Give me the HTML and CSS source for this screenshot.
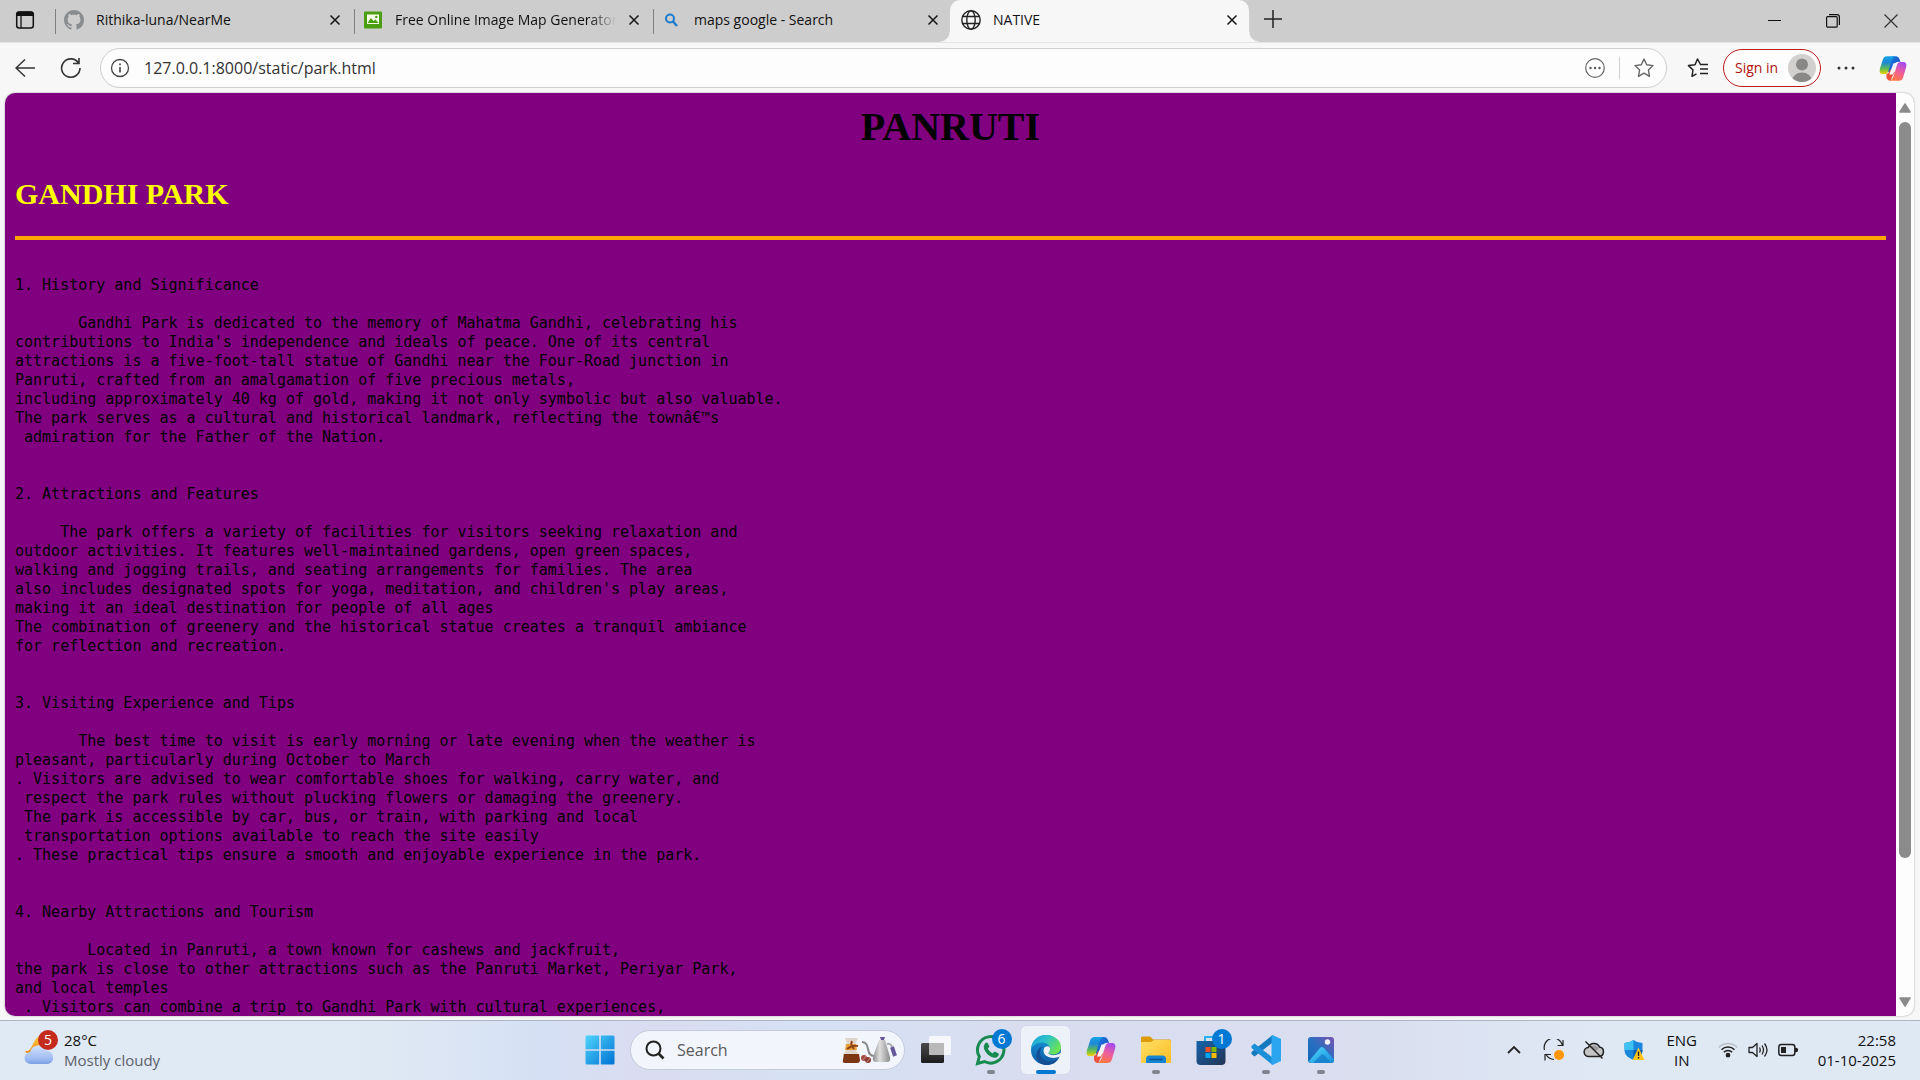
FILE: index.html
```html
<!DOCTYPE html>
<html lang="en">
<head>
<meta charset="utf-8">
<title>NATIVE</title>
<link rel="stylesheet" href="styles.css">
</head>
<body>
<svg width="0" height="0" class="defs" aria-hidden="true">
  <defs>
    <linearGradient id="cpA" x1="0" y1="0" x2="0" y2="1"><stop offset="0" stop-color="#12a5e8"/><stop offset=".35" stop-color="#1f86d8"/><stop offset=".7" stop-color="#5fbf52"/><stop offset="1" stop-color="#f2d000"/></linearGradient>
    <linearGradient id="cpB" x1="0.7" y1="0" x2="0.3" y2="1"><stop offset="0" stop-color="#a54af0"/><stop offset=".5" stop-color="#ee5e9c"/><stop offset="1" stop-color="#ff7a3c"/></linearGradient>
    <linearGradient id="cpC" x1="0" y1="0" x2="1" y2="1"><stop offset="0" stop-color="#1a8fe6"/><stop offset="1" stop-color="#1a34b8"/></linearGradient>
    <linearGradient id="win" x1="0" y1="0" x2="1" y2="1"><stop offset="0" stop-color="#4fd4fb"/><stop offset="1" stop-color="#0072d4"/></linearGradient>
    <linearGradient id="edgeTop" x1="0" y1="0" x2="1" y2=".5"><stop offset="0" stop-color="#1a9fdc"/><stop offset=".5" stop-color="#2cc3c8"/><stop offset="1" stop-color="#6be356"/></linearGradient>
    <linearGradient id="edgeLow" x1="0" y1="0" x2="0" y2="1"><stop offset="0" stop-color="#1a9ade"/><stop offset="1" stop-color="#0c59a4"/></linearGradient>
    <linearGradient id="fold" x1="0" y1="0" x2="1" y2="1"><stop offset="0" stop-color="#ffdf66"/><stop offset="1" stop-color="#fbbd24"/></linearGradient>
    <linearGradient id="store" x1="0" y1="0" x2="1" y2="1"><stop offset="0" stop-color="#1464ac"/><stop offset="1" stop-color="#233453"/></linearGradient>
    <linearGradient id="photo" x1="0" y1="1" x2="1" y2="0"><stop offset="0" stop-color="#1266b8"/><stop offset=".5" stop-color="#2a6fc0"/><stop offset="1" stop-color="#7a52b0"/></linearGradient>
    <linearGradient id="hill" x1="0" y1="0" x2="1" y2="1"><stop offset="0" stop-color="#4fdcff"/><stop offset="1" stop-color="#1688d8"/></linearGradient>
    <linearGradient id="cloud" x1="0" y1="0" x2="0" y2="1"><stop offset="0" stop-color="#d4e2fb"/><stop offset=".7" stop-color="#9fbcf2"/><stop offset="1" stop-color="#7b9fe4"/></linearGradient>
    <linearGradient id="moon" x1="0" y1="0" x2="0" y2="1"><stop offset="0" stop-color="#ffc83c"/><stop offset="1" stop-color="#ee8412"/></linearGradient>
    <linearGradient id="tv" x1="0" y1="0" x2="0" y2="1"><stop offset="0" stop-color="#4a4a4a"/><stop offset="1" stop-color="#1c1c1c"/></linearGradient>
    <linearGradient id="kettle" x1="0" y1="0" x2="1" y2="0"><stop offset="0" stop-color="#8e8e8e"/><stop offset=".4" stop-color="#dedede"/><stop offset="1" stop-color="#8a8a8a"/></linearGradient>
    <symbol id="copilot" viewBox="0 0 30 28">
      <path d="M14 1h4c2 0 3 1 4 3l1 3c-4-1-6 1-7 4l-3 9-6-5z" fill="url(#cpC)"/>
      <path d="M9 1h8c-2 1-3 3-4 6l-3 10c-1 2-2 3-4 3H4c-3 0-4-2-3-6l3-9c1-3 2-4 5-4z" fill="url(#cpA)"/>
      <path d="M8 20c2-1 3-2 4-5l5 3-3 5c-1 3-2 4-1 4h-1c-2 0-3-1-4-3z" fill="#f0503c"/>
      <path d="M21 27h-9c2-1 3-3 4-6l3-10c1-3 2-4 4-4h3c3 0 4 2 3 6l-3 10c-1 3-2 4-5 4z" fill="url(#cpB)"/>
      <path d="M15.500 8.500h4l-4.500 12h-4z" fill="#f4f4fa"/>
    </symbol>
    <symbol id="cross" viewBox="0 0 12 12"><path d="M1.500 1.500l9 9m0-9l-9 9" stroke="#161616" stroke-width="1.500" fill="none"/></symbol>
  </defs>
</svg>

<header class="tabstrip">
  <button class="icon-btn tab-actions" aria-label="Tab actions">
    <svg width="20" height="20" viewBox="0 0 20 20"><rect x="1.700" y="2" width="16.600" height="16" rx="2.500" fill="none" stroke="#111" stroke-width="1.500"/><path d="M1.500 6V4q0-2.500 2.500-2.500h12q2.500 0 2.500 2.500v2z" fill="#111"/><path d="M6 6v12" stroke="#111" stroke-width="1.300"/></svg>
  </button>
  <nav class="tabs">
    <div class="tab">
      <svg width="20" height="20" viewBox="0 0 16 16" fill="#8a8d90"><path d="M8 0C3.580 0 0 3.580 0 8c0 3.540 2.290 6.530 5.470 7.590.4.070.55-.17.55-.38 0-.19-.01-.82-.01-1.490-2.010.37-2.530-.49-2.690-.94-.09-.23-.48-.94-.82-1.130-.28-.15-.68-.52-.01-.53.63-.01 1.080.58 1.230.82.72 1.210 1.870.87 2.330.66.07-.52.28-.87.51-1.070-1.780-.2-3.640-.89-3.640-3.950 0-.87.31-1.590.82-2.150-.08-.2-.36-1.020.08-2.120 0 0 .67-.21 2.200.82.64-.18 1.320-.27 2-.27s1.360.09 2 .27c1.530-1.040 2.200-.82 2.200-.82.44 1.100.16 1.920.08 2.120.51.56.82 1.270.82 2.150 0 3.070-1.870 3.750-3.650 3.950.29.25.54.73.54 1.480 0 1.070-.01 1.930-.01 2.200 0 .21.15.46.55.38A8.010 8.010 0 0 0 16 8c0-4.420-3.580-8-8-8z"/></svg>
      <a href="#github" class="tab-title">Rithika-luna/NearMe</a>
      <button class="icon-btn" aria-label="Close tab"><svg width="12" height="12"><use href="#cross"/></svg></button>
    </div>
    <div class="tab">
      <svg width="20" height="20" viewBox="0 0 20 20"><rect x="1" y="1.500" width="18" height="17" rx="1" fill="#4a9e10"/><rect x="4" y="4.500" width="12" height="9.500" fill="#f4fbe8"/><path d="M4.500 13l3.500-5 2.500 3 2-1.500 3 3.500z" fill="#4a9e10"/><circle cx="13.300" cy="7" r="1.200" fill="#4a9e10"/></svg>
      <a href="#imagemap" class="tab-title fade">Free Online Image Map Generator</a>
      <button class="icon-btn" aria-label="Close tab"><svg width="12" height="12"><use href="#cross"/></svg></button>
    </div>
    <div class="tab">
      <svg width="20" height="20" viewBox="0 0 20 20" fill="none" stroke="#1b7bd0" stroke-width="2"><circle cx="8" cy="8.500" r="4"/><path d="M11 11.500l4 4.500" stroke-width="2.400"/></svg>
      <a href="#maps" class="tab-title">maps google - Search</a>
      <button class="icon-btn" aria-label="Close tab"><svg width="12" height="12"><use href="#cross"/></svg></button>
    </div>
    <div class="tab active">
      <svg width="20" height="20" viewBox="0 0 20 20" fill="none" stroke="#222" stroke-width="1.400"><circle cx="10" cy="10" r="9.200"/><ellipse cx="10" cy="10" rx="4.200" ry="9.200"/><path d="M1.500 6.500h17M1.500 13.500h17"/></svg>
      <a href="#native" class="tab-title">NATIVE</a>
      <button class="icon-btn" aria-label="Close tab"><svg width="12" height="12"><use href="#cross"/></svg></button>
    </div>
    <button class="icon-btn new-tab" aria-label="New tab"><svg width="18" height="18" viewBox="0 0 18 18"><path d="M9 0v18M0 9h18" stroke="#222" stroke-width="1.500"/></svg></button>
  </nav>
  <div class="window-controls">
    <button class="icon-btn" aria-label="Minimize"><svg width="14" height="14" viewBox="0 0 14 14"><path d="M0 6.500h13" stroke="#111"/></svg></button>
    <button class="icon-btn" aria-label="Restore"><svg width="14" height="14" viewBox="0 0 14 14" fill="none" stroke="#111" stroke-width="1.200"><rect x=".6" y="2.600" width="10.600" height="10.600" rx="1"/><path d="M3 .6h8q2.400 0 2.400 2.400v8"/></svg></button>
    <button class="icon-btn" aria-label="Close"><svg width="14" height="14" viewBox="0 0 14 14"><path d="M.5.5l13 13m0-13l-13 13" stroke="#333" stroke-width="1.200"/></svg></button>
  </div>
</header>

<div class="toolbar">
  <button class="icon-btn" aria-label="Back"><svg width="20" height="20" viewBox="0 0 20 20" fill="none" stroke="#333" stroke-width="1.500"><path d="M20 10H1M10 1.500L1 10l9 8.500"/></svg></button>
  <button class="icon-btn" aria-label="Refresh"><svg width="22" height="22" viewBox="0 0 22 22" fill="none" stroke="#333" stroke-width="1.600"><path d="M18.500 6A9.200 9.200 0 1 0 20 11M19 1v5.500h-6"/></svg></button>
  <div class="address">
    <svg width="20" height="20" viewBox="0 0 20 20" fill="none" stroke="#444" stroke-width="1.300"><circle cx="10" cy="10" r="8.500"/><path d="M10 9v5.500M10 5.500v1.800" stroke-width="1.600"/></svg>
    <input type="text" aria-label="Address" value="127.0.0.1:8000/static/park.html">
    <button class="icon-btn" aria-label="More site actions"><svg width="20" height="20" viewBox="0 0 20 20"><circle cx="10" cy="10" r="9.300" fill="none" stroke="#666" stroke-width="1.200"/><g fill="#555"><circle cx="5.500" cy="10" r="1.200"/><circle cx="10" cy="10" r="1.200"/><circle cx="14.500" cy="10" r="1.200"/></g></svg></button>
    <span class="divider"></span>
    <button class="icon-btn" aria-label="Add to favorites"><svg width="20" height="20" viewBox="0 0 20 20"><path d="M10 1l2.700 5.800 6.300.8-4.600 4.400 1.100 6.300L10 15.200l-5.500 3.100 1.100-6.300L1 7.600l6.300-.8z" fill="none" stroke="#666" stroke-width="1.400" stroke-linejoin="round"/></svg></button>
  </div>
  <button class="icon-btn fav" aria-label="Favorites"><svg width="22" height="20" viewBox="0 0 22 20" fill="none" stroke="#222" stroke-width="1.500" stroke-linejoin="round"><path d="M13.500 6.500L10.500 1 8 6.800l-6.500.8L6 12l-1 6.300 4.500-2.500M13 6.500h8M13 11h8M13 15.500h8"/></svg></button>
  <button class="signin">Sign in
    <svg width="28" height="28" viewBox="0 0 28 28"><defs><clipPath id="av"><circle cx="14" cy="14" r="14"/></clipPath></defs><g clip-path="url(#av)"><rect width="28" height="28" fill="#d2d0ce"/><circle cx="14" cy="10.500" r="6" fill="#8a8886"/><ellipse cx="14" cy="27" rx="10" ry="8.500" fill="#8a8886"/></g></svg>
  </button>
  <button class="icon-btn more" aria-label="Settings and more"><svg width="18" height="18" viewBox="0 0 18 18" fill="#333"><circle cx="2" cy="9" r="1.500"/><circle cx="9" cy="9" r="1.500"/><circle cx="16" cy="9" r="1.500"/></svg></button>
  <button class="icon-btn" aria-label="Copilot"><svg width="28" height="27"><use href="#copilot"/></svg></button>
</div>

<div class="frame">
  <div class="view">
    <main class="doc">
      <h1>PANRUTI</h1>
      <h2>GANDHI PARK</h2>
      <hr>
<pre>1. History and Significance

       Gandhi Park is dedicated to the memory of Mahatma Gandhi, celebrating his
contributions to India's independence and ideals of peace. One of its central
attractions is a five-foot-tall statue of Gandhi near the Four-Road junction in
Panruti, crafted from an amalgamation of five precious metals,
including approximately 40 kg of gold, making it not only symbolic but also valuable.
The park serves as a cultural and historical landmark, reflecting the townâ€™s
 admiration for the Father of the Nation.


2. Attractions and Features

     The park offers a variety of facilities for visitors seeking relaxation and
outdoor activities. It features well-maintained gardens, open green spaces,
walking and jogging trails, and seating arrangements for families. The area
also includes designated spots for yoga, meditation, and children's play areas,
making it an ideal destination for people of all ages
The combination of greenery and the historical statue creates a tranquil ambiance
for reflection and recreation.


3. Visiting Experience and Tips

       The best time to visit is early morning or late evening when the weather is
pleasant, particularly during October to March
. Visitors are advised to wear comfortable shoes for walking, carry water, and
 respect the park rules without plucking flowers or damaging the greenery.
 The park is accessible by car, bus, or train, with parking and local
 transportation options available to reach the site easily
. These practical tips ensure a smooth and enjoyable experience in the park.


4. Nearby Attractions and Tourism

        Located in Panruti, a town known for cashews and jackfruit,
the park is close to other attractions such as the Panruti Market, Periyar Park,
and local temples
 . Visitors can combine a trip to Gandhi Park with cultural experiences,</pre>
    </main>
    <div class="scrollbar" aria-hidden="true">
      <svg width="12" height="10" viewBox="0 0 12 10"><path d="M6 1l5 8H1z" fill="#8b8b8b" stroke="#8b8b8b" stroke-width="1.500" stroke-linejoin="round"/></svg>
      <div class="track"><div class="thumb"></div></div>
      <svg width="12" height="10" viewBox="0 0 12 10"><path d="M6 9l5-8H1z" fill="#8b8b8b" stroke="#8b8b8b" stroke-width="1.500" stroke-linejoin="round"/></svg>
    </div>
  </div>
</div>

<footer class="taskbar">
  <button class="weather">
    <span class="badged">
      <svg width="32" height="32" viewBox="0 0 32 32"><path d="M15 2C7 8 9 18 1 17c3 6 16 6 19-5C14 11 14 7 15 2z" fill="url(#moon)"/><path d="M7 30a6 6 0 0 1-1-12 9 9 0 0 1 17-1 6.600 6.600 0 0 1 1 13z" fill="url(#cloud)"/></svg>
      <span class="badge red">5</span>
    </span>
    <span class="stack"><span>28°C</span><span class="muted">Mostly cloudy</span></span>
  </button>
  <div class="apps">
    <button class="app" aria-label="Start"><svg width="30" height="30" viewBox="0 0 30 30"><path d="M2 .5h12.200v13.700H.5V2Q.5.5 2 .5zM15.800.5H28q1.500 0 1.500 1.500v12.200H15.800zM.5 15.800h13.700v13.700H2Q.5 29.500.5 28zM15.800 15.800h13.700V28q0 1.500-1.500 1.500H15.800z" fill="url(#win)"/></svg></button>
    <label class="search">
      <svg width="20" height="20" viewBox="0 0 20 20" fill="none" stroke="#222" stroke-width="2"><circle cx="8.500" cy="8.500" r="7"/><path d="M13.500 13.500l5 5" stroke-width="2.600"/></svg>
      <input type="text" placeholder="Search" aria-label="Search">
      <svg width="56" height="28" viewBox="0 0 56 28"><path d="M3 2h13l-4 9 5 8v6q0 2-2 2H3q-2 0-2-2v-6l5-8z" fill="#dfd6cd"/><path d="M2 18h15l1 6q0 3-3 3H3q-3 0-2-3z" fill="#7c3612"/><path d="M4 8h10l1 6H3z" fill="#e7a33b"/><path d="M10 5q-2 4 2 8M5 13q5-4 11-3" stroke="#934516" stroke-width="2" fill="none"/><path d="M20 6q5 0 6 7t6 7" stroke="#8b8b8b" stroke-width="2" fill="none"/><path d="M37 4h6l5 17q1 5-3 5H34q-4 0-3-5z" fill="url(#kettle)"/><path d="M38 1h5l-1 3h-3z" fill="#65579a"/><path d="M45 8q4-1 5 3" stroke="#aaa" stroke-width="2" fill="none"/><path d="M50 11l3 9" stroke="#65579a" stroke-width="4"/><circle cx="22" cy="22" r="3" fill="#a04a40"/><circle cx="26" cy="24" r="3" fill="#8c3d35"/><path d="M21 24l3-4m1 6l3-4" stroke="#c98b80"/></svg>
    </label>
    <button class="app" aria-label="Task view"><svg width="32" height="32" viewBox="0 0 32 32"><rect x="1" y="9" width="23" height="20" rx="1.500" fill="url(#tv)"/><rect x="9" y="2" width="22" height="19" rx="1.500" fill="#fbfbfb" fill-opacity=".85"/><path d="M9 9h15v12H9z" fill="#b9b9b9"/></svg></button>
    <button class="app open" aria-label="WhatsApp"><span class="badged"><svg width="32" height="32" viewBox="0 0 32 32"><path d="M2.500 29.500l1.800-7A13.200 13.200 0 1 1 9.500 27.500z" fill="none" stroke="#178a50" stroke-width="3"/><path d="M10 9.500q1.500-2 3 0l1.400 3-1.600 2.300q1.500 3 4.700 4.600l2-2 3.300 1.500q2 1 .2 3.300-2.200 2.600-6.400.8Q11 20.500 9 14.800q-.8-3.300 1-5.300z" fill="#178a50"/></svg><span class="badge blue">6</span></span></button>
    <button class="app current" aria-label="Microsoft Edge"><svg width="32" height="32" viewBox="0 0 32 32"><circle cx="16" cy="16" r="15" fill="url(#edgeLow)"/><path d="M1 15C2 6 8 1 16 1c9 0 15 6 15 12 0 5-4 7.500-8 7.500-3 0-4.500-1-4.500-2s1.500-1.700 1.500-4C20 11 16 8.500 12 8.500 6 8.500 2 12 1 15z" fill="url(#edgeTop)"/><path d="M13 12.500c-6 5-2 15 7 15 4 0 7-1.500 9-4-2 5-7 7.500-12 7.500C9 31 5 24 7 18c1-3 3-5 6-5.500z" fill="#124f94"/><path d="M15.500 12.300c-3 1-4 5-2 8.200 2.500 4 9 5 14.500 1.800q2.200-1 1.400.7-2 3-4.400 2.300-9 1-12-5.300c-1.500-3.500 0-7 2.500-7.700z" fill="#1b64ac"/><path d="M15 13c3-2 6 0 5 3-.5 1.500-1.500 2-1.500 3 0 1.500 3 2.500 7 2q4-.5 6-3l-1.500 4.500c-6 3-15.500 1-16.300-4.500-.3-1.800.3-4.200 1.300-5z" fill="#edf1fa"/></svg></button>
    <button class="app" aria-label="Copilot"><svg width="30" height="28"><use href="#copilot"/></svg></button>
    <button class="app open" aria-label="File Explorer"><svg width="30" height="28" viewBox="0 0 30 28"><path d="M0 2q0-1.500 1.500-1.500h8L12 3.500h16.500Q30 3.500 30 5v4H0z" fill="#dc9b08"/><path d="M0 6h10l3-2h15.500Q30 4 30 5.500v20q0 1.500-1.500 1.500h-27Q0 27 0 25.500z" fill="url(#fold)"/><path d="M5 27v-4q0-3.500 3.500-3.500h13q3.500 0 3.500 3.500v4z" fill="#1584d2"/><path d="M8.500 23.500h13" stroke="#0c5290" stroke-width="1.500"/></svg></button>
    <button class="app" aria-label="Microsoft Store"><span class="badged"><svg width="32" height="32" viewBox="0 0 32 32"><path d="M10 8V3h12v5" fill="none" stroke="#26b4e8" stroke-width="2"/><path d="M1.500 7h29v20q0 4-4 4h-21q-4 0-4-4z" fill="url(#store)"/><path d="M10.500 13h5v5h-5z" fill="#f25022"/><path d="M16.500 13h5v5h-5z" fill="#7fba00"/><path d="M10.500 19h5v5h-5z" fill="#00a4ef"/><path d="M16.500 19h5v5h-5z" fill="#ffb900"/></svg><span class="badge blue">1</span></span></button>
    <button class="app open" aria-label="Visual Studio Code"><svg width="32" height="32" viewBox="0 0 32 32"><path d="M22.500 1v7.500L4.500 22.500 1.500 20v-2z" fill="#1279bf"/><path d="M22.500 31v-7.500L4.500 9.500 1.500 12v2z" fill="#1b8fd8"/><path d="M22.500 1l8.500 4v22l-8.500 4q-1-.5-1-1.500v-27q0-1 1-1.500z" fill="#2ba5f0"/></svg></button>
    <button class="app open" aria-label="Photos"><svg width="26" height="26" viewBox="0 0 26 26"><rect width="26" height="26" rx="3" fill="url(#photo)"/><path d="M1 24L12 11q2-2 4 0l10 11.500v.5q0 3-3 3H3q-1.500 0-2-2z" fill="url(#hill)"/><path d="M5 26l8-8q1.500-1.500 3 0l7 8z" fill="#1177c8" fill-opacity=".7"/><circle cx="19.500" cy="5" r="2.700" fill="#f2f2f6"/></svg></button>
  </div>
  <div class="tray">
    <button class="icon-btn" aria-label="Show hidden icons"><svg width="20" height="20" viewBox="0 0 20 20"><path d="M4 13l6-6 6 6" fill="none" stroke="#222" stroke-width="1.800"/></svg></button>
    <button class="icon-btn" aria-label="Sync"><svg width="22" height="22" viewBox="0 0 22 22" fill="none" stroke="#222" stroke-width="1.200"><path d="M1.500 11A9 9 0 0 1 19.500 6M20 1v5.500H14.500M11 20.500A10 10 0 0 1 3 15.500M2 21.500v-6H8"/><circle cx="16" cy="16" r="5" fill="#ff9500" stroke="none"/></svg></button>
    <button class="icon-btn" aria-label="OneDrive"><svg width="22" height="22" viewBox="0 0 22 22"><path d="M6 17.500a4.500 4.500 0 0 1-.7-9A6 6 0 0 1 16.500 8a4.800 4.800 0 0 1-.3 9.500z" fill="#c4c4c4" stroke="#222" stroke-width="1.500"/><path d="M7 8q4-3 9 1l-3 3z" fill="#999"/><path d="M2.500 2.500l17 17" stroke="#222" stroke-width="1.500"/></svg></button>
    <button class="icon-btn" aria-label="Windows Security"><svg width="22" height="22" viewBox="0 0 22 22"><path d="M10.500 1q4 3 9 3v7c0 5-4 8-9 10-5-2-9-5-9-10V4q5 0 9-3z" fill="#1a86dc"/><path d="M10.500 1v10h-9V4q5 0 9-3z" fill="#3cc2f2"/><path d="M10.500 11h9c0 5-4 8-9 10z" fill="#0b5cb0"/><path d="M15.500 8.500l6 12.500h-12z" fill="#ffc21a"/><path d="M15.500 12.500v4.500M15.500 18v1.600" stroke="#222" stroke-width="1.400"/></svg></button>
    <div class="stack lang"><span>ENG</span><span>IN</span></div>
    <button class="quick" aria-label="Network, sound and battery">
      <svg width="20" height="20" viewBox="0 0 20 20" fill="none" stroke="#222" stroke-width="1.500"><path d="M.7 7.500a13 13 0 0 1 18.600 0" stroke="#b9c0c8"/><path d="M3.500 9.800a9.200 9.200 0 0 1 13 0M5.800 12.300a6 6 0 0 1 8.400 0"/><circle cx="10" cy="15.200" r="1.600" fill="#222"/></svg>
      <svg width="20" height="20" viewBox="0 0 20 20" fill="none" stroke="#222" stroke-width="1.300" stroke-linejoin="round"><path d="M1 7.500h3.500L9 3.500v13l-4.500-4H1zM11.500 7.500q1.500 2.500 0 5M14 5.500q3 4.500 0 9M16.500 3.500q5 6.500 0 13"/></svg>
      <svg width="20" height="20" viewBox="0 0 20 20"><rect x=".8" y="4.500" width="16" height="11" rx="2.500" fill="none" stroke="#222" stroke-width="1.500"/><rect x="3" y="7" width="5" height="6" fill="#222"/><path d="M17.500 8l2 .8v2.400l-2 .8z" fill="#222" stroke="#222"/></svg>
    </button>
    <div class="stack clock"><span>22:58</span><span>01-10-2025</span></div>
  </div>
</footer>
</body>
</html>
```

FILE: styles.css
```css
* { box-sizing: border-box; }

html, body { height: 100%; }

body {
  margin: 0;
  display: flex;
  flex-direction: column;
  overflow: hidden;
  background: #f7f7f7;
  color: #111;
  font: 14px/20px "Open Sans", "Noto Sans", sans-serif;
}

svg { display: block; flex: none; }
.defs { position: absolute; }

button, input {
  margin: 0;
  padding: 0;
  border: 0;
  background: none;
  color: inherit;
  font: inherit;
}

.icon-btn {
  display: flex;
  flex: none;
  align-items: center;
  justify-content: center;
}

/* Tab strip */
.tabstrip {
  display: flex;
  flex: none;
  height: 42px;
  background: #cdcdcd;
}

.tab-actions { width: 50px; height: 40px; }

.tabs { display: flex; flex: 1; min-width: 0; padding-left: 3px; }

.tab {
  position: relative;
  display: flex;
  align-items: center;
  gap: 12px;
  flex: 0 1 299px;
  min-width: 0;
  padding: 0 11px 2px 11px;
}

.tab::before {
  content: "";
  position: absolute;
  left: 2px;
  top: 9px;
  width: 1px;
  height: 25px;
  background: #808080;
}

.tab-title {
  flex: 1;
  min-width: 0;
  overflow: hidden;
  white-space: nowrap;
  color: #111;
  text-decoration: none;
}

.fade {
  -webkit-mask-image: linear-gradient(to right, #000 88%, transparent);
  mask-image: linear-gradient(to right, #000 88%, transparent);
}

.tab.active { background: #f7f7f7; border-radius: 10px 10px 0 0; }

.tab.active::before,
.tab.active::after {
  content: "";
  position: absolute;
  top: auto;
  bottom: 0;
  width: 10px;
  height: 10px;
}

.tab.active::before {
  left: -10px;
  background: radial-gradient(circle at 0 0, #cdcdcd 9px, #f7f7f7 10px);
}

.tab.active::after {
  right: -10px;
  background: radial-gradient(circle at 100% 0, #cdcdcd 9px, #f7f7f7 10px);
}

.new-tab { width: 48px; height: 38px; }

.window-controls { display: flex; height: 42px; }
.window-controls .icon-btn { width: 58px; }

/* Toolbar */
.toolbar {
  display: flex;
  flex: none;
  align-items: center;
  height: 51px;
  padding: 0 4px 0 2px;
  border-top: 1px solid #e4e4e4;
}

.toolbar > .icon-btn { width: 46px; height: 40px; }

.address {
  display: flex;
  flex: 1;
  align-items: center;
  gap: 14px;
  height: 40px;
  margin: 0 6px;
  padding: 0 12px 0 9px;
  border: 1px solid #cfcfcf;
  border-radius: 20px;
  background: #fdfdfd;
}

.address input {
  flex: 1;
  min-width: 0;
  outline: 0;
  color: #333;
  font-size: 16px;
}

.divider { width: 1px; height: 22px; background: #d0d0d0; }

.toolbar > .fav { width: 50px; }

.signin {
  display: flex;
  align-items: center;
  justify-content: space-between;
  width: 98px;
  height: 38px;
  padding: 0 4px 0 11px;
  border: 1px solid #b81c1c;
  border-radius: 19px;
  background: #fdfdfd;
  color: #b01010;
}

.toolbar > .more { width: 49px; }

/* Web page area */
.frame {
  display: flex;
  flex: 1;
  min-height: 0;
  padding: 0 6px 4px 5px;
}

.view {
  display: flex;
  flex: 1;
  min-width: 0;
  overflow: hidden;
  border-radius: 10px;
  background: #fdfdfd;
  box-shadow: 0 0 2px #999;
}

.doc {
  flex: 1;
  min-width: 0;
  overflow: hidden;
  padding: 11px 10px 0;
  background: #800080;
  color: #000;
  font-family: "Liberation Serif", serif;
}

.doc h1 {
  margin: 0 0 27px;
  font-size: 40px;
  line-height: 46px;
  text-align: center;
}

.doc h2 {
  margin: 0 0 25px;
  color: #ff0;
  font-size: 30px;
  line-height: 34px;
}

.doc hr { height: 4px; margin: 0 0 36px; border: 0; background: #ffa500; }

.doc pre {
  margin: 0;
  font: 15px/19px "DejaVu Sans Mono", "Liberation Mono", monospace;
}

.scrollbar {
  display: flex;
  flex-direction: column;
  align-items: center;
  gap: 9px;
  width: 18px;
  padding: 10px 0 9px;
}

.track { flex: 1; width: 12px; }
.thumb { height: 85%; border-radius: 6px; background: #8b8b8b; }

/* Taskbar */
.taskbar {
  display: grid;
  grid-template-columns: 1fr auto 1fr;
  flex: none;
  align-items: center;
  height: 60px;
  padding-bottom: 1px;
  border-top: 1px solid #b0b6c2;
  background: linear-gradient(to right, #dfeaf4 0, #dfe9f4 20%, #d5e0f4 28%, #dadcf0 34%, #d6e2f4 42%, #d8dcef 54%, #dadff0 72%, #dfe9f4 84%, #dfe9f4 100%);
}

.weather {
  display: flex;
  align-items: center;
  gap: 8px;
  padding-left: 24px;
  text-align: left;
}

.badged { position: relative; display: block; }

.badge {
  position: absolute;
  top: -5px;
  right: -5px;
  width: 20px;
  height: 20px;
  border-radius: 10px;
  color: #fff;
  text-align: center;
}

.weather .badge { top: -4px; right: -2px; }
.red { background: #c42b1c; }
.blue { background: #0078d4; }

.stack {
  display: flex;
  flex-direction: column;
  font-size: 15px;
  white-space: nowrap;
}

.muted { color: #5c6068; }

.apps { display: flex; align-items: center; }

.app {
  position: relative;
  display: flex;
  align-items: center;
  justify-content: center;
  width: 49px;
  height: 48px;
  margin: 0 3px;
  border-radius: 5px;
}

.app.current { background: #edf1fa; box-shadow: 0 0 1px #b8bfd0; }

.app.open::after,
.app.current::after {
  content: "";
  position: absolute;
  bottom: 0;
  width: 8px;
  height: 4px;
  border-radius: 2px;
  background: #80848e;
}

.app.current::after { width: 20px; background: #0078d4; }

.search {
  display: flex;
  align-items: center;
  gap: 12px;
  width: 275px;
  height: 40px;
  margin: 0 3px;
  padding: 0 6px 0 14px;
  border: 1px solid #c4cbdc;
  border-radius: 20px;
  background: #f2f5fb;
}

.search input { flex: 1; min-width: 0; outline: 0; font-size: 16px; }
.search input::placeholder { color: #5a5a5a; opacity: 1; }

.tray {
  display: flex;
  align-items: center;
  justify-content: flex-end;
  padding-right: 24px;
}

.tray .icon-btn { width: 40px; height: 40px; }
.lang { width: 56px; align-items: center; }
.quick { display: flex; gap: 10px; margin: 0 20px 0 8px; }
.clock { align-items: flex-end; }
```
